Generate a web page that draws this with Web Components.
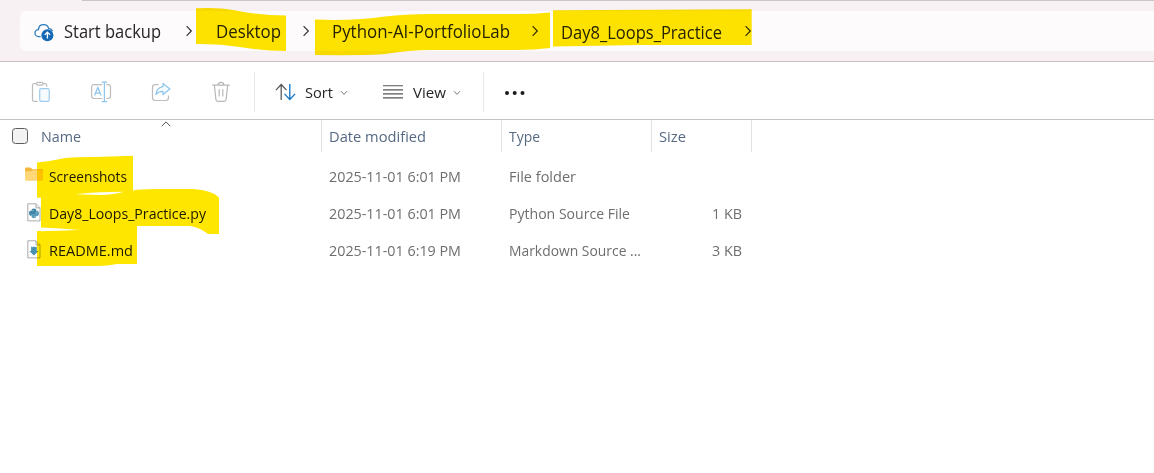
<!DOCTYPE html>
<html lang="en">
<head>
<meta charset="utf-8">
<title>File Explorer</title>
<style>
html,body{margin:0;height:100%;background:#fff;overflow:hidden}
body{font-family:"Open Sans","Noto Sans",sans-serif}
</style>
</head>
<body>
<file-explorer></file-explorer>
<script>
const define = (name, html, setup) => {
  const t = document.createElement('template');
  t.innerHTML = html;
  customElements.define(name, class extends HTMLElement {
    connectedCallback() {
      if (this.shadowRoot) return;
      this.attachShadow({mode: 'open'}).append(t.content.cloneNode(true));
      if (setup) setup(this, this.shadowRoot);
    }
  });
};

/* A label whose text is condensed to an exact width. */
define('fit-label', `<style>
:host{display:block;flex:none;white-space:pre;line-height:20px}
span{display:inline-block;transform-origin:0 50%}
</style><span></span>`, (el, root) => {
  const s = root.querySelector('span');
  s.textContent = el.getAttribute('text');
  const w = +el.getAttribute('w');
  el.style.width = w + 'px';
  const natural = s.getBoundingClientRect().width;
  if (natural) s.style.transform = `translateY(var(--dy, -1px)) scaleX(${(w / natural).toFixed(5)})`;
});

const glyphs = {
cloud: [20,20,`<path d="M6.700 14.600H4.600a3.500 3.500 0 0 1-.2-7C4.700 4.600 6.800 2.700 9.600 2.700c2.600 0 4.500 1.500 5.100 3.900 1.800.1 3.200 1.100 3.700 2.600" fill="none" stroke="#2b7bbf" stroke-width="1.3"/><circle cx="13.400" cy="13.300" r="6" fill="#1769b5"/><path d="M13.400 16.500v-6M10.700 12.900l2.700-2.700 2.700 2.700" fill="none" stroke="#fff" stroke-width="1.300"/>`],
crumb: [8,12,`<path d="M1.600 1.200 6.300 6 1.600 10.800" fill="none" stroke="#333" stroke-width="1.200"/>`],
paste: [20,22,`<g fill="none" stroke="#bdbdbd" stroke-width="1.200"><path d="M5.500 2.700H3a1.500 1.500 0 0 0-1.500 1.500v14.600A1.500 1.500 0 0 0 3 20.300h3.600M12 2.700h2.200a1.500 1.500 0 0 1 1.500 1.500v1.500"/><rect x="5.600" y="1.400" width="6.500" height="2.700" rx="1.300"/></g><rect x="8.700" y="7.600" width="9.500" height="12.800" rx="1.600" fill="#f5fbff" stroke="#9dcbed" stroke-width="1.200"/>`],
rename: [22,22,`<g fill="none" stroke="#bdbdbd" stroke-width="1.200"><path d="M12.300 3.700H4A2.400 2.400 0 0 0 1.600 6.100v9A2.400 2.400 0 0 0 4 17.500h8.300M16.500 3.700h1.600a2.400 2.400 0 0 1 2.400 2.400v9a2.400 2.400 0 0 1-2.400 2.400h-1.600"/></g><path d="M4.500 14.600 7.800 6.500l3.300 8.100M5.600 12h4.400M14.400 1.600v18.800M11.700 1.200h5.500M11.700 20.700h5.500" fill="none" stroke="#8fc5ec" stroke-width="1.250"/>`],
share: [22,22,`<path d="M8.500 3.700H5.200A2.700 2.700 0 0 0 2.500 6.400v10.400a2.700 2.700 0 0 0 2.700 2.700h10.600a2.700 2.700 0 0 0 2.700-2.700v-2.300" fill="none" stroke="#bdbdbd" stroke-width="1.200"/><path d="M13 2.400 19.900 7.900 13 13.600v-3.200c-3-.1-5.100.7-7 3.300.3-4.200 2.700-7.400 7-8z" fill="#f7fcff" stroke="#8fc5ec" stroke-width="1.250" stroke-linejoin="round"/>`],
bin: [20,22,`<g fill="none" stroke="#b7b7b7" stroke-width="1.200" stroke-linecap="round"><path d="M1.600 4.100h16.800M7.200 3.900a2.700 2.400 0 0 1 5.600 0M3.400 4.200l1.500 14.300a2 2 0 0 0 2 1.800h6.200a2 2 0 0 0 2-1.800l1.500-14.300M8.200 8.700v6.200M11.800 8.700v6.200"/></g>`],
sort: [22,18,`<path d="M6.200 17V1.800M.9 7.100 6.200 1.500l5.300 5.600" fill="none" stroke="#555" stroke-width="1.250"/><path d="M14.800 1v15.200M9.500 10.900l5.300 5.600 5.300-5.600" fill="none" stroke="#1976c5" stroke-width="1.350"/>`],
lines: [20,14,`<path d="M0 .8h20M0 4.900h20M0 8.900h20M0 12.900h20" stroke="#555" stroke-width="1.100"/>`],
down: [8,6,`<path d="M1 1.200 4 4.400 7 1.200" fill="none" stroke="#777" stroke-width="1"/>`],
up: [10,6,`<path d="M.7 5.200 5 .9l4.300 4.300" fill="none" stroke="#555" stroke-width="1"/>`],
dots: [22,6,`<g fill="#1b1b1b"><circle cx="3" cy="3" r="2"/><circle cx="10.700" cy="3" r="2"/><circle cx="18.500" cy="3" r="2"/></g>`],
folder: [18,16,`<path d="M0 3V1.700Q0 .5 1.200.5h4.300l1.800 1.700h9.200Q18 2.200 18 3.600V6H0z" fill="#f3b73c"/><path d="M0 4.300h6l1.500-1h9Q18 3.300 18 4.800v7.700q0 1.300-1.400 1.300H1.300Q0 13.800 0 12.500z" fill="#fed777"/>`],
py: [14,19,`<path d="M.8.8h8.300l3.900 4v13.100H.8z" fill="#fdfdfd" stroke="#a3a3a3" stroke-width=".9"/><path d="M9 .9v4h4" fill="#eee" stroke="#9b9b9b" stroke-width=".8"/><g transform="translate(-.3 -.6) scale(1.050)"><path d="M4.500 7.600q0-1.700 2.400-1.700t2.400 1.700v2.300q0 1.100-1.300 1.100H5.700q-1.200 0-1.200 1.600h-.9q-1.400 0-1.400-2.400 0-2.200 1.500-2.200h3.200v-.4z" fill="#3f86a8"/><path d="M9.300 13.300q0 1.700-2.400 1.700t-2.400-1.700v-1q0-1.300 1.200-1.300H8q1.300 0 1.300-1.400V8h.9q1.500 0 1.500 2.400 0 2.500-1.500 2.500H6.900v.4z" fill="#5799ba"/></g>`],
md: [14,19,`<path d="M.8.8h8.300l3.900 4v13.100H.8z" fill="#fdfdfd" stroke="#a3a3a3" stroke-width=".9"/><path d="M9 .9v4h4" fill="#eee" stroke="#9b9b9b" stroke-width=".8"/><path d="M4.100 6.500l1.400.8L6.900 6.500l1.500.8L9.800 6.500v4.600h1.700L6.900 15.600l-4.600-4.500h1.800z" fill="#4a91b1"/>`]
};
define('ui-icon', `<style>:host{display:block;flex:none}svg{display:block}</style>`, (el, root) => {
  const [w, h, body] = glyphs[el.getAttribute('name')];
  const d = document.createElement('template');
  d.innerHTML = `<svg width="${w}" height="${h}" viewBox="0 0 ${w} ${h}">${body}</svg>`;
  root.append(d.content);
});

define('address-bar', `<style>
:host{display:block;height:62px;box-sizing:border-box;background:#f7f1f3;border-bottom:1px solid #cbc1c5;--dy:.5px}
.edge{height:1px;margin-left:82px;background:#cfc3c8}
.bar{margin:10px 0 0 20px;height:40px;background:#fdfbfc;border-radius:6px 0 0 6px;display:flex;align-items:center;font-size:17.300px;color:#262626}
.cloud{margin:1px 9px 0 14px}
</style>
<div class="edge"></div>
<nav class="bar"><ui-icon class="cloud" name="cloud"></ui-icon>
<fit-label style="margin-left:1px" text="Start backup" w="97"></fit-label><ui-icon name="crumb" style="margin-left:24px"></ui-icon>
<fit-label style="margin-left:23px" text="Desktop" w="65"></fit-label><ui-icon name="crumb" style="margin-left:21px"></ui-icon>
<fit-label style="margin-left:22px" text="Python-AI-PortfolioLab" w="178"></fit-label><ui-icon name="crumb" style="margin-left:21px"></ui-icon>
<fit-label style="margin:1px 0 0 22px" text="Day8_Loops_Practice" w="161"></fit-label><ui-icon name="crumb" style="margin-left:22px"></ui-icon>
</nav>`);

define('command-bar', `<style>
:host{display:flex;align-items:center;height:58px;box-sizing:border-box;padding:3px 0 0 31px;border-bottom:1px solid #c4c4c4;font-size:14.800px;color:#262626}
i{width:1px;height:40px;background:#e8e8e8;flex:none;margin-top:-1px}
fit-label{margin-top:2px}
</style>
<ui-icon name="paste"></ui-icon><ui-icon name="rename" style="margin-left:39px"></ui-icon><ui-icon name="share" style="margin-left:38px"></ui-icon><ui-icon name="bin" style="margin-left:39px"></ui-icon>
<i style="margin-left:23px"></i>
<ui-icon name="sort" style="margin-left:20px"></ui-icon><fit-label style="margin-left:8px" text="Sort" w="28"></fit-label><ui-icon name="down" style="margin:1px 0 0 7px"></ui-icon>
<ui-icon name="lines" style="margin-left:35px"></ui-icon><fit-label style="margin-left:10px" text="View" w="33"></fit-label><ui-icon name="down" style="margin:1px 0 0 7px"></ui-icon>
<i style="margin-left:22px"></i><ui-icon name="dots" style="margin:1px 0 0 20px"></ui-icon>`);

define('column-header', `<style>
:host{display:grid;grid-template-columns:322px 180px 150px 100px;height:32px;font-size:14.800px;color:#566983;position:relative}
div{display:flex;align-items:center;border-right:1px solid #e2e2e2;padding:2px 0 0 7px;box-sizing:border-box}
.name{padding-left:12px}
b{width:16px;height:16px;box-sizing:border-box;border:1px solid #5e5e5e;border-radius:3.500px;background:#f3f3f3;margin:-2px 13px 0 0}
.up{position:absolute;left:161px;top:1px}
</style>
<div class="name"><b></b><fit-label text="Name" w="40"></fit-label></div>
<div><fit-label text="Date modified" w="97"></fit-label></div>
<div><fit-label text="Type" w="31"></fit-label></div>
<div><fit-label text="Size" w="27"></fit-label></div>
<ui-icon class="up" name="up"></ui-icon>`);

define('file-row', `<style>
:host{display:grid;grid-template-columns:322px 180px 150px 90px;height:37px;align-items:center;font-size:14.800px;color:#6e6e6e}
.n{display:flex;align-items:center;color:#1c1c1c}
.i{width:24px;padding-left:25px;display:flex}
.c{padding-left:7px}
.s{display:flex;justify-content:flex-end}
</style>
<div class="n"><div class="i"><slot name="icon"></slot></div><slot name="name"></slot></div>
<div class="c"><slot name="date"></slot></div><div class="c"><slot name="type"></slot></div><div class="s"><slot name="size"></slot></div>`);

/* Freehand marker strokes laid over the window. */
define('marker-layer', `<style>:host{position:absolute;left:0;top:0;mix-blend-mode:multiply;pointer-events:none}svg{display:block}</style>
<svg width="1154" height="473" fill="#ffe600">
<path d="M196 8.300Q218 7 233 10 257 15 286 15.500V51Q263 51 240 47 218 43.500 196 44z"/>
<path d="M315 19.500Q355 21 385 16.500 405 14 430 14H517Q534 14 550 12.500V48Q534 50 517 50H430Q410 50 385 54 370 55.500 315 55z"/>
<path d="M553 10.300 751.700 9.300V45H640L553 46.500z"/>
<path d="M37 162.500Q52 161 65 158 78 156.700 95 157L133 155.700V190.500Q140 189 155 189H193Q212 190 219 197.500V234H208Q199 227 190 226H137V264H117Q108 266 97 266H37V231L80 230 60 228.500 41 227.500V197.700H37V162.500z"/>
</svg>`);

/* Unmarked gaps between neighbouring strokes. */
define('sliver-layer', `<style>:host{position:absolute;left:0;top:0;pointer-events:none}svg{display:block}</style>
<svg width="1154" height="473" fill="#fffef2"><path d="M75 194.300Q90 192.500 110 192L124 191.700Q115 194.500 100 195z"/><path d="M41 228.300Q55 228.500 73 230L41 231.200z"/></svg>`);

define('file-explorer', `<style>
:host{display:block;position:relative;width:1154px;height:473px;background:#fff;overflow:hidden;isolation:isolate}
.rows{padding-top:6px}
</style>
<address-bar></address-bar><command-bar></command-bar><column-header></column-header>
<div class="rows">
<file-row><ui-icon slot="icon" name="folder" style="margin-top:-3px"></ui-icon><fit-label slot="name" text="Screenshots" w="78"></fit-label><fit-label slot="date" text="2025-11-01 6:01 PM" w="132"></fit-label><fit-label slot="type" text="File folder" w="67"></fit-label></file-row>
<file-row><ui-icon slot="icon" name="py" style="margin:-2px 0 0 2px"></ui-icon><fit-label slot="name" text="Day8_Loops_Practice.py" w="157"></fit-label><fit-label slot="date" text="2025-11-01 6:01 PM" w="132"></fit-label><fit-label slot="type" text="Python Source File" w="121"></fit-label><fit-label slot="size" text="1 KB" w="30"></fit-label></file-row>
<file-row><ui-icon slot="icon" name="md" style="margin:-2px 0 0 2px"></ui-icon><fit-label slot="name" text="README.md" w="84"></fit-label><fit-label slot="date" text="2025-11-01 6:19 PM" w="132"></fit-label><fit-label slot="type" text="Markdown Source ..." w="132"></fit-label><fit-label slot="size" text="3 KB" w="30"></fit-label></file-row>
</div>
<marker-layer></marker-layer><sliver-layer></sliver-layer>`);
</script>
</body>
</html>
